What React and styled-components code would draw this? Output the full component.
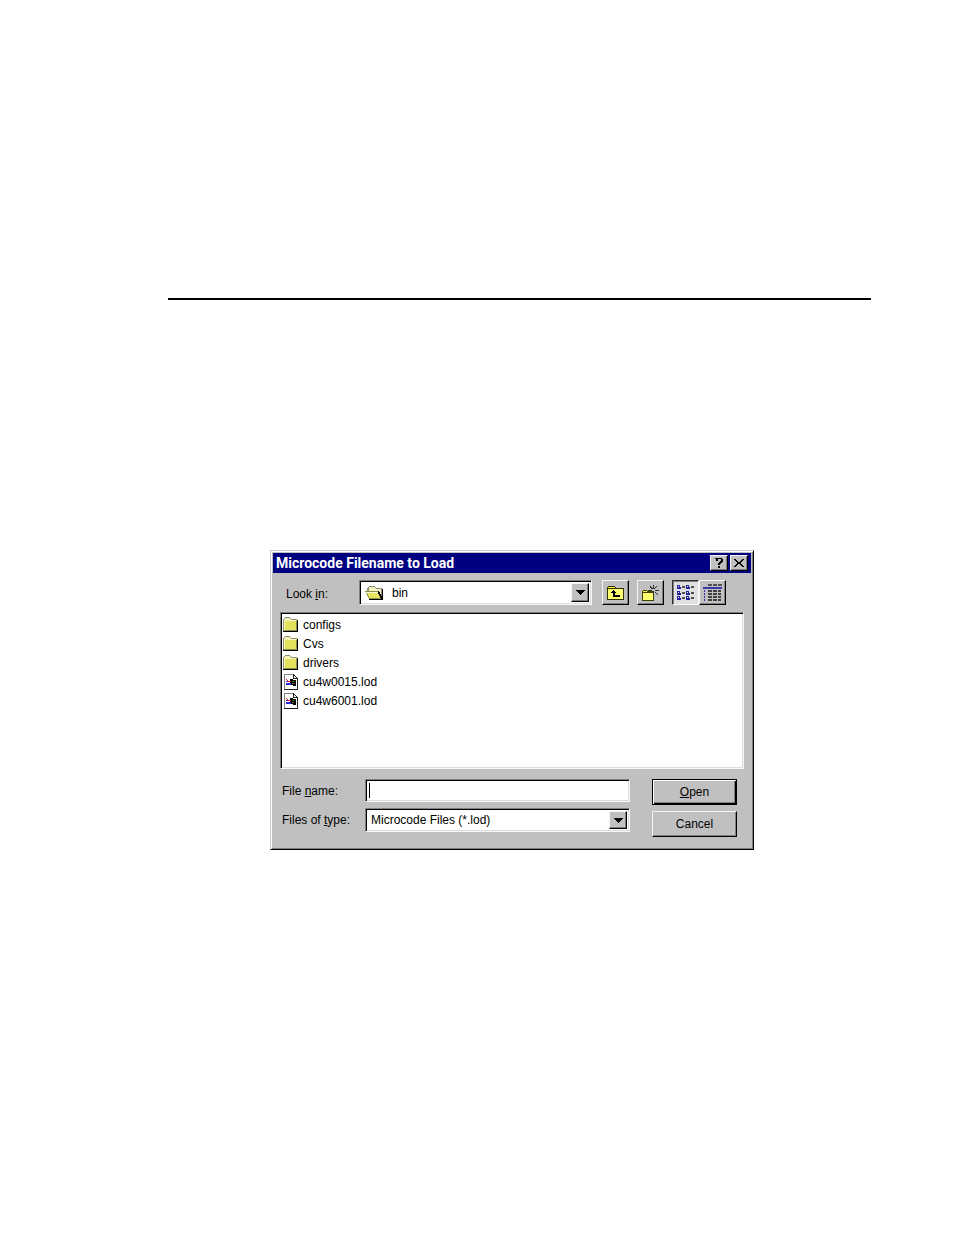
import { useState } from 'react'
import styled, { createGlobalStyle, css } from 'styled-components'

const FILES = [
  { name: 'configs', kind: 'folder' },
  { name: 'Cvs', kind: 'folder' },
  { name: 'drivers', kind: 'folder' },
  { name: 'cu4w0015.lod', kind: 'file' },
  { name: 'cu4w6001.lod', kind: 'file' },
]

const FolderIcon = () => (
  <Icon width="17" height="17" viewBox="0 0 17 17">
    <path d="M1 3h1v-1h1v-1h5v1h1v1h6v12h-14z" fill="#8c8c70" />
    <path d="M3 2h5v1h1v1h-7v-1h1z" fill="#f4f4b0" />
    <path d="M2 4h13v10h-13z" fill="#e2e25c" />
    <path d="M2 4h12v1h-11v9h-1z" fill="#f8f8c4" />
    <path d="M15 4h1v12h-15v-1h14z" fill="#000" />
    <path d="M14 5h1v10h-13v-1h12z" fill="#8c8c50" />
  </Icon>
)

const OpenFolderIcon = () => (
  <Icon width="19" height="16" viewBox="0 0 19 16">
    <path d="M3 2h1v-1h6v1h1v1h6v11h-12l-3-5v-6h1z" fill="#8c8c78" />
    <path d="M4 2h6v1h1v1h5v9h-11z" fill="#f2f2c0" />
    <path d="M0 6h13v1h1v2h1v2h1v3h-12v-1h-1v-2h-1v-2h-1v-2h-1z" fill="#8c8c50" />
    <path d="M1 7h12v2h1v2h1v2h-11v-2h-1v-2h-1v-1h-1z" fill="#e4e460" />
    <path d="M1 7h12v1h-12z" fill="#fafad0" />
    <path d="M17 4h1v11h-14v-1h13zM13 6h1v1h1v2h1v2h1v3h-1v-1h-1v-2h-1v-2h-1z" fill="#000" />
  </Icon>
)

const FileIcon = () => (
  <Icon width="17" height="17" viewBox="0 0 17 17">
    <path d="M2 1h9v1h-8v14h-1z" fill="#808080" />
    <path d="M3 2h8v4h4v10h-12z" fill="#fff" />
    <path d="M11 1h1v1h1v1h1v1h1v1h1v12h-14v-1h13v-10h-4z" fill="#202020" />
    <path d="M12 3h1v1h1v1h-2z" fill="#fff" />
    <path d="M8 6h3v1h3v6h-3v-1h-3z" fill="#000" />
    <path d="M4 6h1v1h-1zM5 7h1v1h-1zM6 8h3v1h-3z" fill="#e02020" />
    <path d="M4 8h2v1h-2zM4 10h2v2h-2zM6 10h3v2h-3z" fill="#2828d8" />
    <path d="M10 8h2v1h-2z" fill="#108010" />
    <path d="M10 10h2v1h-2z" fill="#707020" />
  </Icon>
)

const UpIcon = () => (
  <Icon width="19" height="16" viewBox="0 0 19 16">
    <path d="M1 2h1v-1h7v1h1v1h8v12h-17z" fill="#303000" />
    <path d="M2 2h7v1h-7z" fill="#ffff30" />
    <path d="M2 4h15v10h-15z" fill="#ffff70" />
    <path d="M7 5h1v1h1v1h1v1h-1v2h5v2h-7v-4h-2v-1h1v-1h1z" fill="#000" />
  </Icon>
)

const NewFolderIcon = () => (
  <Icon width="19" height="18" viewBox="0 0 19 18">
    <path d="M1 7h1v-1h4v1h7v10h-12z" fill="#404000" />
    <path d="M2 7h4v1h-4z" fill="#ffff60" />
    <path d="M2 9h10v7h-10z" fill="#ffff70" />
    <path
      d="M12 1h1v4h-1zM12 8h1v3h-1zM7 6h4v1h-4zM14 6h4v1h-4zM9 2h1v1h1v1h1v1h-2v-1h-1zM15 2h1v1h-1v1h-1v1h-1v-1h1v-1h1zM14 8h1v1h1v1h1v1h-1v-1h-1v-1h-1z"
      fill="#303030"
    />
  </Icon>
)

const ListViewIcon = () => (
  <Icon width="19" height="17" viewBox="0 0 19 17">
    {[1, 7, 12].map(y => (
      <g key={y}>
        {[1, 10].map(x => (
          <g key={x}>
            <path d={`M${x} ${y}h3v2h1v2h-4z`} fill="#2020a0" />
            <path d={`M${x + 1} ${y + 1}h1v1h-1z`} fill="#fff" />
            <path d={`M${x + 5} ${y + 1}h3v2h-3z`} fill="#505050" />
          </g>
        ))}
      </g>
    ))}
  </Icon>
)

const DetailsIcon = () => (
  <Icon width="20" height="17" viewBox="0 0 20 17">
    <path d="M5 0h4v2h-4zM10 0h4v2h-4zM15 0h4v2h-4z" fill="#505050" />
    <path d="M0 3h19v2h-19z" fill="#3838a8" />
    {[6, 9, 12, 15].map(y => (
      <g key={y}>
        <path d={`M1 ${y}h1v2h-1z`} fill="#3030b0" />
        <path d={`M5 ${y}h4v2h-4zM10 ${y}h4v2h-4zM15 ${y}h3v2h-3z`} fill="#404040" />
      </g>
    ))}
  </Icon>
)

const Arrow = () => (
  <ArrowBox>
    <Icon width="9" height="5" viewBox="0 0 9 5">
      <path d="M0 0h9v1h-1v1h-1v1h-1v1h-1v1h-1v-1h-1v-1h-1v-1h-1v-1h-1z" />
    </Icon>
  </ArrowBox>
)

const App = () => {
  const [view, setView] = useState('list')
  const [fileName, setFileName] = useState('')

  return (
    <Page>
      <GlobalStyle />
      <Rule />
      <Dialog role="dialog" aria-labelledby="dialog-title">
        <TitleBar>
          <Title id="dialog-title">Microcode Filename to Load</Title>
          <TitleButton type="button" aria-label="Help">
            <Icon width="8" height="10" viewBox="0 0 8 10">
              <path d="M1 0h6v1h1v3h-1v1h-1v1h-1v1h-2v-2h1v-1h1v-1h1v-2h-3v2h-2v-2h-1v-1h1zM3 8h2v2h-2z" />
            </Icon>
          </TitleButton>
          <TitleButton type="button" aria-label="Close">
            <Icon width="10" height="8" viewBox="0 0 10 8">
              <path d="M0 0h2v1h1v1h1v1h2v-1h1v-1h1v-1h2v1h-1v1h-1v1h-1v2h1v1h1v1h1v1h-2v-1h-1v-1h-1v-1h-2v1h-1v1h-1v1h-2v-1h1v-1h1v-1h1v-2h-1v-1h-1v-1h-1z" />
            </Icon>
          </TitleButton>
        </TitleBar>

        <Toolbar>
          <ToolbarLabel htmlFor="look-in">
            Look <u>i</u>n:
          </ToolbarLabel>
          <Combo $height={25}>
            <OpenFolderIcon />
            <Select id="look-in" defaultValue="bin">
              <option>bin</option>
            </Select>
            <Arrow />
          </Combo>
          <ToolButtons>
            <ToolButton type="button" aria-label="Up One Level">
              <UpIcon />
            </ToolButton>
            <ToolButton type="button" aria-label="Create New Folder">
              <NewFolderIcon />
            </ToolButton>
            <ViewGroup>
              <ToolButton
                type="button"
                aria-label="List"
                aria-pressed={view === 'list'}
                $pressed={view === 'list'}
                onClick={() => setView('list')}
              >
                <ListViewIcon />
              </ToolButton>
              <ToolButton
                type="button"
                aria-label="Details"
                aria-pressed={view === 'details'}
                $pressed={view === 'details'}
                onClick={() => setView('details')}
              >
                <DetailsIcon />
              </ToolButton>
            </ViewGroup>
          </ToolButtons>
        </Toolbar>

        <FileList>
          {FILES.map(file => (
            <FileItem key={file.name}>
              {file.kind === 'folder' ? <FolderIcon /> : <FileIcon />}
              {file.name}
            </FileItem>
          ))}
        </FileList>

        <Footer onSubmit={e => e.preventDefault()}>
          <Fields>
            <Field>
              <FieldLabel htmlFor="file-name">
                File <u>n</u>ame:
              </FieldLabel>
              <InputBox>
                <Caret />
                <Input
                  id="file-name"
                  type="text"
                  value={fileName}
                  onChange={e => setFileName(e.target.value)}
                />
              </InputBox>
            </Field>
            <Field>
              <FieldLabel htmlFor="file-type">
                Files of <u>t</u>ype:
              </FieldLabel>
              <Combo $height={24}>
                <Select id="file-type" defaultValue="lod">
                  <option value="lod">Microcode Files (*.lod)</option>
                </Select>
                <Arrow />
              </Combo>
            </Field>
          </Fields>
          <Actions>
            <ActionButton type="submit" $primary>
              <span><u>O</u>pen</span>
            </ActionButton>
            <ActionButton type="button">Cancel</ActionButton>
          </Actions>
        </Footer>
      </Dialog>
    </Page>
  )
}

const GlobalStyle = createGlobalStyle`
  * {
    box-sizing: border-box;
  }

  body {
    margin: 0;
    background: #fff;
    color: #000;
    font: 12px/16px 'Liberation Sans', Arial, sans-serif;
  }

  button,
  input,
  select {
    font: inherit;
    color: inherit;
  }

  u {
    text-underline-offset: 1px;
  }
`

const raised = css`
  border: 1px solid;
  border-color: #f4f4f4 #000 #000 #f4f4f4;
  box-shadow: inset -1px -1px #808080;
  background: #c0c0c0;
`

const sunken = css`
  border: 1px solid;
  border-color: #808080 #f8f8f8 #f8f8f8 #808080;
  box-shadow: inset 1px 1px #000, inset -1px -1px #dcdcdc;
  background: #fff;
`

const Page = styled.main`
  padding: 298px 83px 40px 168px;
`

const Rule = styled.hr`
  margin: 0;
  border: 0;
  border-top: 2px solid #000;
`

const Dialog = styled.section`
  margin: 250px 117px 0 102px;
  padding: 2px;
  border: 1px solid;
  border-color: #c8c8c8 #000 #000 #c8c8c8;
  box-shadow: inset 1px 1px #fff, inset -1px -1px #808080;
  background: #c0c0c0;
`

const Icon = styled.svg.attrs({ 'aria-hidden': true, shapeRendering: 'crispEdges' })`
  display: block;
  flex: none;
`

const TitleBar = styled.header`
  display: flex;
  align-items: center;
  gap: 2px;
  height: 20px;
  padding: 0 3px;
  background: #000080;
  color: #fff;
`

const Title = styled.h1`
  flex: 1;
  margin: 0;
  font-family: Roboto, Arial, sans-serif;
  font-size: 14px;
  line-height: 20px;
`

const TitleButton = styled.button`
  ${raised}
  display: flex;
  align-items: center;
  justify-content: center;
  width: 18px;
  height: 16px;
  padding: 0;
`

const Toolbar = styled.div`
  display: flex;
  align-items: center;
  padding: 7px 25px 7px 13px;
`

const ToolbarLabel = styled.label`
  width: 73px;
  padding-top: 2px;
`

const Combo = styled.div`
  ${sunken}
  display: flex;
  align-items: center;
  flex: 1;
  height: ${props => props.$height}px;
  padding: 2px 2px 2px 5px;
`

const Select = styled.select`
  flex: 1;
  min-width: 0;
  height: 18px;
  padding: 0;
  border: 0;
  outline: 0;
  appearance: none;
  background: transparent;

  svg + & {
    margin-left: 8px;
  }
`

const ArrowBox = styled.span`
  ${raised}
  display: flex;
  align-items: center;
  justify-content: center;
  align-self: stretch;
  width: 18px;
  pointer-events: none;
`

const ToolButtons = styled.div`
  display: flex;
  gap: 8px;
  margin-left: 10px;
`

const ViewGroup = styled.div`
  display: flex;
`

const ToolButton = styled.button`
  ${raised}
  display: flex;
  align-items: center;
  justify-content: center;
  width: 27px;
  height: 25px;
  padding: 0;

  ${props => props.$pressed && css`
    border-color: #303030 #f8f8f8 #f8f8f8 #303030;
    box-shadow: inset 1px 1px #808080;
    background: #e0e0e0;
  `}
`

const FileList = styled.ul`
  ${sunken}
  height: 157px;
  margin: 0 7px;
  padding: 2px 1px;
  list-style: none;
  overflow: hidden;
`

const FileItem = styled.li`
  display: flex;
  align-items: center;
  gap: 4px;
  height: 19px;
`

const Footer = styled.form`
  display: flex;
  gap: 22px;
  padding: 10px 14px 10px 9px;
`

const Fields = styled.div`
  display: flex;
  flex-direction: column;
  gap: 6px;
  flex: 1;
`

const Field = styled.div`
  display: flex;
  align-items: center;
`

const FieldLabel = styled.label`
  width: 83px;
`

const InputBox = styled.div`
  ${sunken}
  display: flex;
  align-items: center;
  flex: 1;
  height: 23px;
  padding: 0 3px;
`

const Caret = styled.span`
  width: 1px;
  height: 15px;
  background: #000;
`

const Input = styled.input`
  flex: 1;
  min-width: 0;
  padding: 0;
  border: 0;
  outline: 0;
  background: transparent;
`

const Actions = styled.div`
  display: flex;
  flex-direction: column;
  gap: 6px;
`

const ActionButton = styled.button`
  ${raised}
  width: 85px;
  height: 26px;
  padding: 0;

  ${props => props.$primary && css`
    border-color: #000;
    box-shadow: inset 1px 1px #fff, inset -1px -1px #000, inset -2px -2px #808080;
  `}
`

export default App
